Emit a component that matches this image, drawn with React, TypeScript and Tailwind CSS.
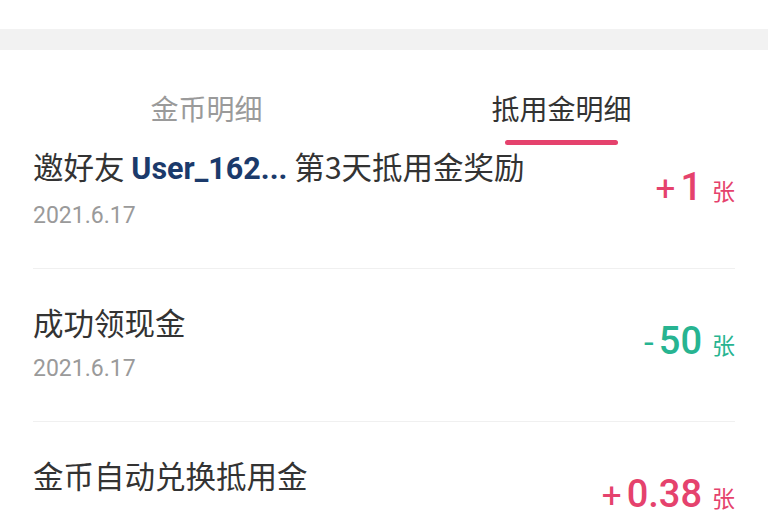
import React from "react"

type Record = {
    title: React.ReactNode
    date: string
    sign: string
    amount: string
    color: "pink" | "teal"
}

const latin = { fontFamily: "Roboto, 'Noto Sans CJK SC', sans-serif" }

const records: Record[] = [
    {
        title: (
            <>
                邀好友 <span className="font-bold text-[#1b3a6b]" style={latin}>User_162...</span> 第3天抵用金奖励
            </>
        ),
        date: "2021.6.17",
        sign: "+",
        amount: "1",
        color: "pink",
    },
    { title: "成功领现金", date: "2021.6.17", sign: "-", amount: "50", color: "teal" },
    { title: "金币自动兑换抵用金", date: "2021.6.17", sign: "+", amount: "0.38", color: "pink" },
]

function RecordRow({ item, first }: { item: Record; first: boolean }) {
    const tone = item.color === "pink" ? "text-[#e5426d]" : "text-[#27b491]"
    return (
        <div className={`${first ? "pt-[1px]" : "pt-[33px]"} mx-[33px] pb-[36px] border-b border-[#f0f0f0] flex items-center justify-between`}>
            <div className="flex flex-col">
                <div className="text-[30.5px] leading-[40px] text-[#333333] whitespace-nowrap">{item.title}</div>
                <div className="mt-[11px] text-[23px] leading-[32px] text-[#9a9a9a]" style={latin}>
                    {item.date}
                </div>
            </div>
            <div className={`flex items-baseline ${tone}`} style={latin}>
                <span className="text-[35px] mr-[5px]">{item.sign}</span>
                <span className="text-[38px] font-medium leading-[44px]">{item.amount}</span>
                <span className="text-[23px] ml-[10px]">张</span>
            </div>
        </div>
    )
}

export default function App() {
    return (
        <div className="w-[768px] h-[510px] overflow-hidden bg-white" style={{ fontFamily: "'Noto Sans CJK SC', 'Noto Sans', sans-serif" }}>
            {/* cut-off line from the section above */}
            <div className="h-[29px] overflow-hidden px-[25px]">
                <div className="-mt-[26px] text-[24px] leading-[24px] text-[#777777] whitespace-nowrap">
                    每日邀请好友可获得抵用金奖励，抵用金可提现使用
                </div>
            </div>
            <div className="h-[21px] bg-[#f2f2f2]" />

            {/* tabs */}
            <div className="grid grid-cols-2 px-[29px] pt-[38px]">
                <div className="flex flex-col items-center">
                    <div className="text-[28px] leading-[40px] text-[#9a9a9a]">金币明细</div>
                    <div className="mt-[12px] h-[5px]" />
                </div>
                <div className="flex flex-col items-center">
                    <div className="text-[28px] leading-[40px] text-[#333333]">抵用金明细</div>
                    <div className="mt-[12px] h-[5px] w-[113px] rounded-full bg-[#e5426d]" />
                </div>
            </div>

            {records.map((item, i) => (
                <RecordRow key={i} item={item} first={i === 0} />
            ))}
        </div>
    )
}
